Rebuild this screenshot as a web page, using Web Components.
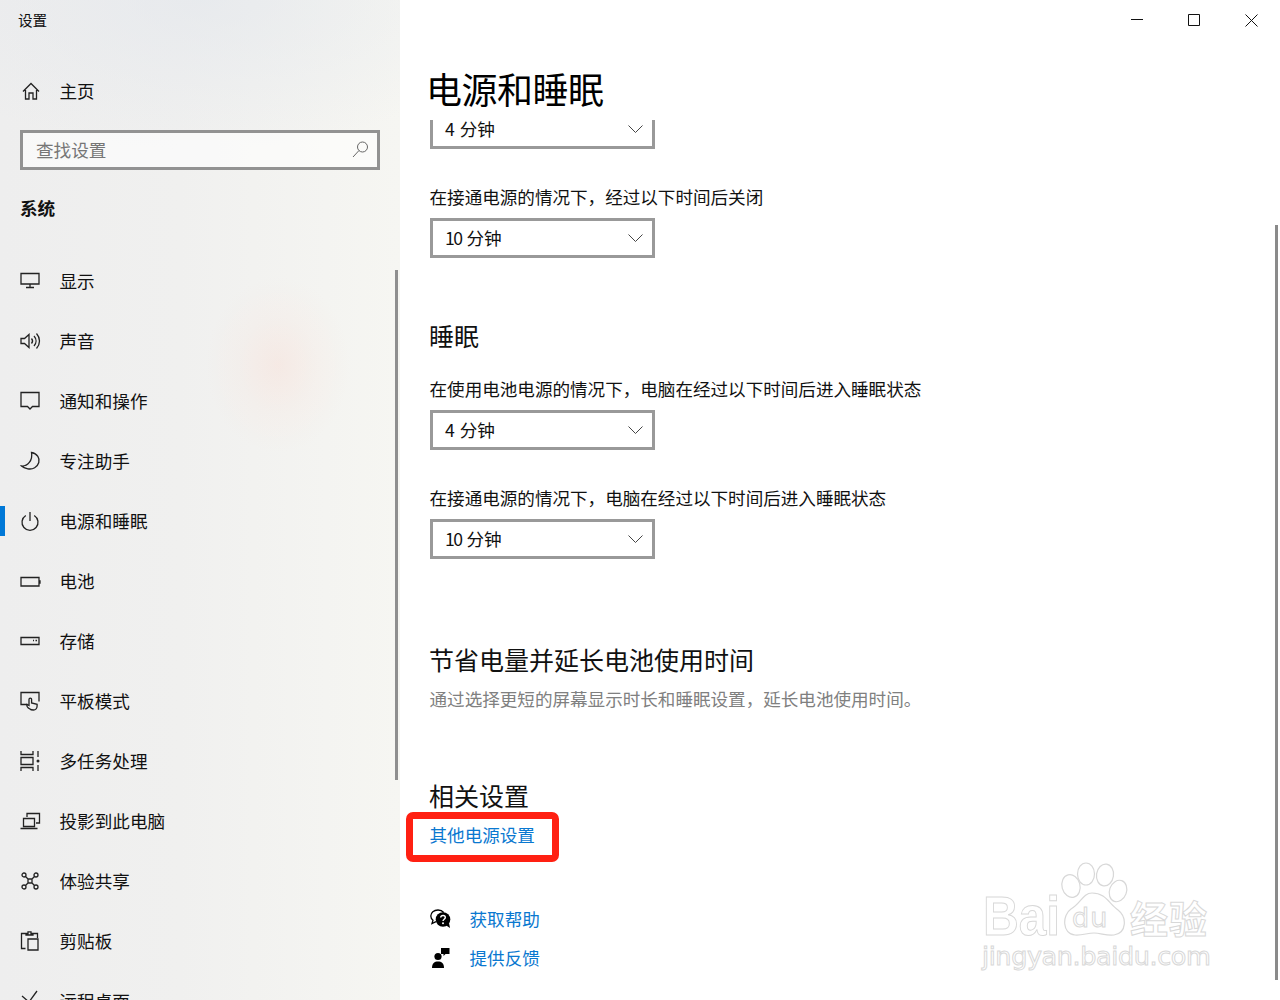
<!DOCTYPE html>
<html lang="zh-CN"><head><meta charset="utf-8"><title>设置</title>
<style>
html,body{margin:0;padding:0;background:#fff}
body{width:1280px;height:1000px;overflow:hidden;font-family:"Noto Sans CJK SC","Liberation Sans",sans-serif;font-weight:400;color:#000}
</style></head><body>
<settings-app></settings-app>
<script>
const ICONS={
home:'<path d="M3 10.500 11 2.500l8 8M5.500 9v9H9v-6h4v6h3.500V9"/>',
display:'<path d="M1 2.500h18v10.500H1zM10 13v3M6 16.500h8"/>',
sound:'<path d="M1 7.500h3.500L9 3.500v13L4.500 12.500H1zM11.500 7.500c1.300 1.500 1.300 3.500 0 5M14 5c2.700 3 2.700 7 0 10M16.500 2.500c4 4.500 4 10.500 0 15"/>',
notify:'<path d="M1 1.500h18v14h-6.500L10 18l-2.500-2.500H1z"/>',
moon:'<path d="M11.500 1.500c6 1 8.500 6 7.300 10-1.300 4.500-6 7.300-11 6.300C5 17.300 2.500 16 1.500 15c6 .5 11.500-5.500 10-13.500z"/>',
power:'<path d="M10 1v9M5.800 4.500a8 8 0 1 0 8.400 0"/>',
battery:'<path d="M1 6.500h18v8.500H1zM19 10h1v2h-1"/>',
storage:'<path d="M1 6.500h18v7H1z"/><path d="M13 9.500h1M15.500 9.500h1.500"/>',
tablet:'<path d="M7.500 13.500H1V1.500h18v9"/><path d="M10 18c-2-1-3.500-3-3-4.500l2 1V8.500a1.300 1.300 0 0 1 2.600 0V12l5.500 1.300V15c0 2-1.500 4-3.600 4-1.500 0-3-.3-3.500-1z"/>',
multi:'<path d="M1 0v3.500h12V0M1 20v-3.500h12V20M1 6.500h12v7H1zM18 0v6M18 14v6"/>'
 +'<circle cx="18" cy="10" r="1.500" fill="#222" stroke="none"/>',
project:'<path d="M7 6V2.500h12.500V12H16"/><path d="M3.500 7.500h11v8h-11zM0.500 17.500h17"/>',
share:'<circle cx="4" cy="4" r="2"/><circle cx="16" cy="4" r="2"/><circle cx="4" cy="16" r="2"/><circle cx="16" cy="16" r="2"/><path d="M8 8h4v4H8zM5.500 5.500 8 8M14.500 5.500 12 8M5.500 14.500 8 12M14.500 14.500 12 12"/>',
clip:'<path d="M5.500 17.500H1.500v-15h4.500M13 2.500h4.500V7M6 4V2.500h2V0.800h3v1.700h2V4z"/><path d="M8 8h10v11H8z"/>',
remote:'<path d="M2 5l7 6M17 0 9 11"/>'
};
function icon(n){return '<svg width="20" height="20" viewBox="0 0 20 20" fill="none" stroke="#222" stroke-width="1.300" style="overflow:visible">'+ICONS[n]+'</svg>';}

class NavItem extends HTMLElement{
 constructor(){super();
  const s=this.attachShadow({mode:'open'});
  const n=this.getAttribute('icon');
  s.innerHTML=`<style>
  :host{display:flex;align-items:center;height:60px;padding-left:20px;font-size:17.6px;line-height:24px;color:#111;position:relative;flex:none}
  :host([active])::before{content:"";position:absolute;left:0;top:15px;width:5px;height:30px;background:#0078d7}
  svg{display:block;flex:none;margin-right:19.500px}
  </style>${icon(n)}<slot></slot>`;
 }
}
customElements.define('nav-item',NavItem);

class SearchBox extends HTMLElement{
 constructor(){super();
  this.attachShadow({mode:'open'}).innerHTML=`<style>
  :host{display:flex;flex:none;align-items:center;justify-content:space-between;box-sizing:border-box;width:360px;height:40px;margin:0 20px;padding:0 8px 2px 13px;border:3px solid #929292;background:rgba(255,255,255,.6);font-size:17.6px;color:#767676}
  svg{display:block}
  </style><slot></slot><svg width="17" height="17" viewBox="0 0 17 17" fill="none" stroke="#666" stroke-width="1"><circle cx="10.500" cy="6" r="5"/><path d="M7 9.500 1 16"/></svg>`;
 }
}
customElements.define('search-box',SearchBox);

class SideBar extends HTMLElement{
 constructor(){super();
  this.attachShadow({mode:'open'}).innerHTML=`<style>
  :host{display:flex;flex-direction:column;flex:none;width:400px;height:1000px;overflow:hidden;position:relative;
   background:
    radial-gradient(ellipse 72px 88px at 278px 365px,rgba(255,200,185,.22),rgba(255,212,200,.1) 55%,rgba(255,235,228,0) 100%),
    radial-gradient(ellipse 320px 150px at 200px 0,rgba(226,230,236,.6),rgba(232,234,236,0) 100%),
    linear-gradient(90deg,#eeeeee,#f0f0ef 45%,#f6f6f2)}
  .title{height:40px;flex:none;box-sizing:border-box;padding-left:18px;font-size:14.6px;line-height:40px;color:#111}
  .cat{height:38px;flex:none;margin:20px 0 23px;padding-left:20px;font-size:17.6px;line-height:36px;font-weight:700;color:#111}
  .bar{position:absolute;left:395px;top:270px;width:3px;height:510px;background:#8e8e8e}
  </style>
  <div class="title">设置</div>
  <nav-item icon="home" style="margin-top:21px">主页</nav-item>
  <search-box style="margin-top:9px">查找设置</search-box>
  <div class="cat">系统</div>
  <slot></slot>
  <div class="bar"></div>`;
 }
}
customElements.define('side-bar',SideBar);

class DropSel extends HTMLElement{
 constructor(){super();
  this.attachShadow({mode:'open'}).innerHTML=`<style>
  :host{display:flex;align-items:center;justify-content:space-between;box-sizing:border-box;width:225px;height:40px;padding:0 9px 2px 12px;border:3px solid #999;background:#fff;font-size:17.6px;color:#111;flex:none;word-spacing:1px}
  svg{display:block;margin-top:2px}
  </style><div><slot></slot></div><svg width="15" height="8" viewBox="0 0 15 8" fill="none" stroke="#444" stroke-width="1"><path d="M.5.500 7.500 7.500 14.500.500"/></svg>`;
 }
}
customElements.define('drop-sel',DropSel);

class WinCtl extends HTMLElement{
 constructor(){super();
  this.attachShadow({mode:'open'}).innerHTML=`<style>
  :host{display:flex;height:40px;flex:none;align-items:flex-start;padding-right:22px;justify-content:flex-end;gap:45px;padding-top:14px;box-sizing:border-box}
  svg{display:block}
  </style>
  <svg width="12" height="12" viewBox="0 0 12 12" fill="none" stroke="#111"><path d="M0 5.500h12"/></svg>
  <svg width="12" height="12" viewBox="0 0 12 12" fill="none" stroke="#111"><path d="M.5.500h11v11H.5z"/></svg>
  <svg width="13" height="13" viewBox="0 0 13 13" fill="none" stroke="#111"><path d="M.5.500 12.500 12.500M12.500.500 .5 12.500"/></svg>`;
 }
}
customElements.define('win-ctl',WinCtl);

class MainPane extends HTMLElement{
 constructor(){super();
  this.attachShadow({mode:'open'}).innerHTML=`<style>
  :host{display:flex;flex-direction:column;flex:1;height:1000px;position:relative;overflow:hidden;background:#fff}
  .head{height:80px;flex:none;padding:18px 0 0 26px;font-size:36px;line-height:60px;color:#000;font-weight:400;box-sizing:border-box;letter-spacing:-.5px}
  .body{flex:1;overflow:hidden;padding-left:30px;display:flex;flex-direction:column;align-items:flex-start}
  .bar{position:absolute;left:875px;top:225px;width:3px;height:755px;background:#8a8a8a}
  </style>
  <win-ctl></win-ctl>
  <div class="head">电源和睡眠</div>
  <div class="body"><slot></slot></div>
  <div class="bar"></div>`;
 }
}
customElements.define('main-pane',MainPane);

class SetLabel extends HTMLElement{
 constructor(){super();
  this.attachShadow({mode:'open'}).innerHTML=`<style>:host{display:block;font-size:17.6px;line-height:24px;color:#111;flex:none;margin-left:-.5px;letter-spacing:-.03px}</style><slot></slot>`;
 }
}
customElements.define('set-label',SetLabel);

class SetHead extends HTMLElement{
 constructor(){super();
  this.attachShadow({mode:'open'}).innerHTML=`<style>:host{display:block;font-size:25px;line-height:36px;color:#111;font-weight:400;flex:none;margin-left:-1px}</style><slot></slot>`;
 }
}
customElements.define('set-head',SetHead);

class HelpLink extends HTMLElement{
 constructor(){super();
  const k=this.getAttribute('kind');
  const svg=k==='help'
  ?`<svg width="21" height="20" viewBox="0 0 21 20"><path d="M8 1C3.800 1 .8 3.500.8 7c0 1.800 1 3.300 2.200 4.300L2 14.500l4-1.800" fill="none" stroke="#000" stroke-width="1.300"/><path d="M8 1c2.500 0 4.500 1 5.700 2.500" fill="none" stroke="#000" stroke-width="1.300"/><circle cx="13" cy="10.500" r="7.300" fill="#000"/><path d="M15.500 16l4.500 3-1-5z" fill="#000"/><path d="M10.700 8.500c.2-2.600 4.600-2.600 4.600 0 0 1.700-2.300 1.700-2.300 3.500" fill="none" stroke="#fff" stroke-width="1.400"/><circle cx="13" cy="14.200" r="1" fill="#fff"/></svg>`
  :`<svg width="21" height="20" viewBox="0 0 21 20" fill="#000"><circle cx="8" cy="8.500" r="3.600"/><path d="M2 20c0-5 2.500-6.500 6-6.500s6 1.500 6 6.500z"/><path d="M11 0h8.500v6H15.500l-2 2V6H11z"/></svg>`;
  this.attachShadow({mode:'open'}).innerHTML=`<style>
  :host{display:flex;align-items:center;height:24px;font-size:17.6px;line-height:24px;color:#0a78d0;flex:none}
  svg{display:block;flex:none;margin-right:18.500px}
  </style>${svg}<slot></slot>`;
 }
}
customElements.define('help-link',HelpLink);

class BaiduMark extends HTMLElement{
 constructor(){super();
  this.attachShadow({mode:'open'}).innerHTML=`<style>
  :host{position:absolute;left:980px;top:860px;width:240px;height:115px;display:block;pointer-events:none}
  .t{position:absolute;color:#fff;-webkit-text-stroke:1px #d8d8d8;white-space:nowrap;font-family:"DejaVu Sans","Noto Sans CJK SC",sans-serif;font-weight:700}
  svg{position:absolute;left:79px;top:2px}
  </style>
  <span class="t" style="left:3px;top:27px;font-family:'Liberation Sans',sans-serif;font-size:55px;line-height:58px;transform:scaleX(.9);transform-origin:0 0">Bai</span>
  <svg width="72" height="74" viewBox="0 0 72 74" fill="#fff" stroke="#d8d8d8" stroke-width="1.200">
   <ellipse cx="12" cy="24" rx="9" ry="11.500" transform="rotate(-15 12 24)"/>
   <ellipse cx="27" cy="12" rx="8.500" ry="11"/>
   <ellipse cx="46" cy="13" rx="8.500" ry="11" transform="rotate(8 46 13)"/>
   <ellipse cx="59" cy="29" rx="8.500" ry="11" transform="rotate(20 59 29)"/>
   <path d="M33 31C24 31 22 41 12 47 3 53 3 72 16 73c8 .5 12-2 19-2s12 3 20 2c13-2 13-18 4-25-9-6-12-17-26-17z"/>
  </svg>
  <span class="t" style="left:92px;top:42px;font-size:27px;line-height:32px;font-weight:400;letter-spacing:1px">du</span>
  <span class="t" style="left:150px;top:37px;font-size:38px;line-height:40px;letter-spacing:1px;font-family:'Noto Sans CJK SC',sans-serif;font-weight:700">经验</span>
  <span class="t" style="left:2px;top:78px;font-size:25.500px;line-height:36px;font-weight:400;letter-spacing:-.4px">jingyan.baidu.com</span>`;
 }
}
customElements.define('baidu-mark',BaiduMark);

class RedBox extends HTMLElement{
 constructor(){super();
  this.attachShadow({mode:'open'}).innerHTML=`<style>
  :host{position:absolute;left:406px;top:812px;width:153px;height:50px;box-sizing:border-box;border:7px solid #ff2012;border-radius:7px;display:block;pointer-events:none}
  </style>`;
 }
}
customElements.define('red-box',RedBox);

class SettingsApp extends HTMLElement{
 constructor(){super();
  const ten='<span style="letter-spacing:-1.500px">10</span>';
  this.attachShadow({mode:'open'}).innerHTML=`<style>
  :host{display:flex;width:1280px;height:1000px;position:relative;overflow:hidden}
  </style>
  <side-bar>
   <nav-item icon="display">显示</nav-item>
   <nav-item icon="sound">声音</nav-item>
   <nav-item icon="notify">通知和操作</nav-item>
   <nav-item icon="moon">专注助手</nav-item>
   <nav-item icon="power" active>电源和睡眠</nav-item>
   <nav-item icon="battery">电池</nav-item>
   <nav-item icon="storage">存储</nav-item>
   <nav-item icon="tablet">平板模式</nav-item>
   <nav-item icon="multi">多任务处理</nav-item>
   <nav-item icon="project">投影到此电脑</nav-item>
   <nav-item icon="share">体验共享</nav-item>
   <nav-item icon="clip">剪贴板</nav-item>
   <nav-item icon="remote">远程桌面</nav-item>
  </side-bar>
  <main-pane>
   <drop-sel style="margin-top:-11px;padding-bottom:2px">4 分钟</drop-sel>
   <set-label style="margin-top:36px;margin-bottom:9px">在接通电源的情况下，经过以下时间后关闭</set-label>
   <drop-sel>${ten} 分钟</drop-sel>
   <set-head style="margin-top:59px">睡眠</set-head>
   <set-label style="margin-top:24px;margin-bottom:9px">在使用电池电源的情况下，电脑在经过以下时间后进入睡眠状态</set-label>
   <drop-sel>4 分钟</drop-sel>
   <set-label style="margin-top:36px;margin-bottom:9px">在接通电源的情况下，电脑在经过以下时间后进入睡眠状态</set-label>
   <drop-sel>${ten} 分钟</drop-sel>
   <set-head style="margin-top:82px">节省电量并延长电池使用时间</set-head>
   <set-label style="margin-top:10px;color:#808080">通过选择更短的屏幕显示时长和睡眠设置，延长电池使用时间。</set-label>
   <set-head style="margin-top:66px">相关设置</set-head>
   <set-label style="margin-top:10px;color:#0a78d0">其他电源设置</set-label>
   <help-link kind="help" style="margin-top:60px">获取帮助</help-link>
   <help-link kind="feedback" style="margin-top:15px">提供反馈</help-link>
  </main-pane>
  <red-box></red-box>
  <baidu-mark></baidu-mark>`;
 }
}
customElements.define('settings-app',SettingsApp);
</script>
</body></html>
